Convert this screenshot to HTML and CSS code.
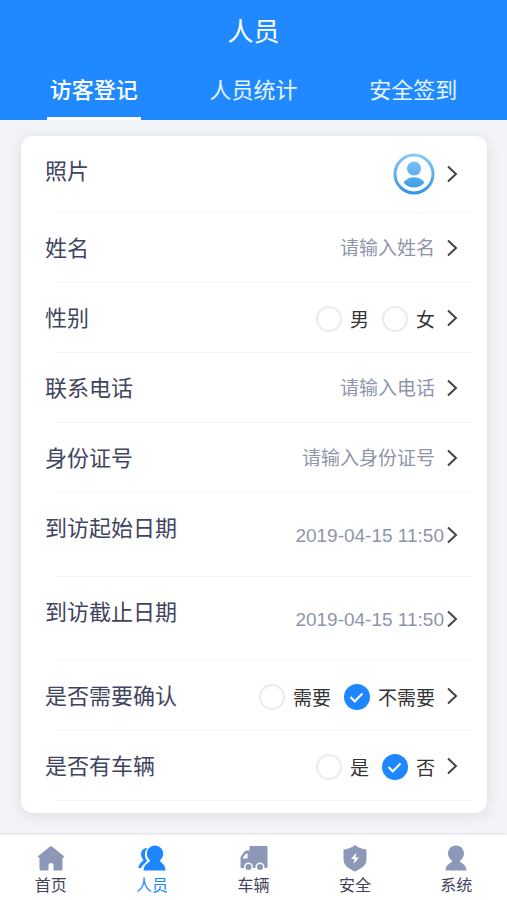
FILE: index.html
```html
<!DOCTYPE html>
<html lang="zh-CN">
<head>
    <meta charset="UTF-8">
    <meta name="viewport" content="width=device-width, initial-scale=1">
    <title>人员</title>
    <link rel="stylesheet" href="styles.css">
</head>
<body>
    <svg class="sprite" aria-hidden="true">
        <symbol id="arrow" viewBox="0 0 12 18">
            <path d="M2 1.5 L10 9 L2 16.5" fill="none" stroke="currentColor" stroke-width="2"/>
        </symbol>
    </svg>
    <header class="header">
        <h1>人员</h1>
        <nav class="tabs">
            <a class="selected" href="#visitor">访客登记</a>
            <a href="#count">人员统计</a>
            <a href="#sign">安全签到</a>
        </nav>
    </header>
    <main>
        <form class="card">
            <div class="row row-photo">
                <label class="name" for="photo">照片</label>
                <button class="photo" id="photo" type="button">
                    <svg class="avatar" viewBox="0 0 42 42">
                        <defs>
                            <linearGradient id="blue" x1="0" y1="0" x2="0" y2="42" gradientUnits="userSpaceOnUse">
                                <stop offset="0" stop-color="#8ecbf8"/>
                                <stop offset="1" stop-color="#2f93e4"/>
                            </linearGradient>
                        </defs>
                        <circle cx="21" cy="21" r="19" fill="none" stroke="url(#blue)" stroke-width="3"/>
                        <circle cx="21" cy="15.5" r="7" fill="url(#blue)"/>
                        <path d="M10.5 29.5 C13 26 17 24.3 21 24.3 S29 26 31.5 29.5 C29 33 25 34.5 21 34.5 S13 33 10.5 29.5Z" fill="url(#blue)"/>
                    </svg>
                    <svg class="arrow"><use href="#arrow"/></svg>
                </button>
            </div>
            <div class="row">
                <label class="name" for="username">姓名</label>
                <input class="text" id="username" type="text" placeholder="请输入姓名">
                <svg class="arrow"><use href="#arrow"/></svg>
            </div>
            <div class="row" role="radiogroup" aria-labelledby="sex">
                <span class="name" id="sex">性别</span>
                <div class="options">
                    <label><input type="radio" name="sex">男</label>
                    <label><input type="radio" name="sex">女</label>
                </div>
                <svg class="arrow"><use href="#arrow"/></svg>
            </div>
            <div class="row">
                <label class="name" for="phone">联系电话</label>
                <input class="text" id="phone" type="tel" placeholder="请输入电话">
                <svg class="arrow"><use href="#arrow"/></svg>
            </div>
            <div class="row">
                <label class="name" for="idcard">身份证号</label>
                <input class="text" id="idcard" type="text" placeholder="请输入身份证号">
                <svg class="arrow"><use href="#arrow"/></svg>
            </div>
            <div class="row row-date">
                <label class="name" for="start">到访起始日期</label>
                <input class="text" id="start" type="text" value="2019-04-15 11:50">
                <svg class="arrow"><use href="#arrow"/></svg>
            </div>
            <div class="row row-date">
                <label class="name" for="end">到访截止日期</label>
                <input class="text" id="end" type="text" value="2019-04-15 11:50">
                <svg class="arrow"><use href="#arrow"/></svg>
            </div>
            <div class="row" role="radiogroup" aria-labelledby="confirm">
                <span class="name" id="confirm">是否需要确认</span>
                <div class="options">
                    <label><input type="radio" name="confirm">需要</label>
                    <label><input type="radio" name="confirm" checked>不需要</label>
                </div>
                <svg class="arrow"><use href="#arrow"/></svg>
            </div>
            <div class="row" role="radiogroup" aria-labelledby="car">
                <span class="name" id="car">是否有车辆</span>
                <div class="options">
                    <label><input type="radio" name="car">是</label>
                    <label><input type="radio" name="car" checked>否</label>
                </div>
                <svg class="arrow"><use href="#arrow"/></svg>
            </div>
        </form>
    </main>
    <nav class="footer">
        <a href="#home">
            <svg viewBox="0 0 28 28">
                <path d="M13 1.6 Q14 .8 15 1.6 L27 11.2 Q27.8 12.5 26.5 12.5 H25.5 V24 Q25.5 25.5 24 25.5 H16.5 V19.5 Q16.5 18 14 18 T11.5 19.5 V25.5 H4 Q2.5 25.5 2.5 24 V12.5 H1.5 Q.2 12.5 1 11.2Z"/>
            </svg>
            首页
        </a>
        <a class="selected" href="#people">
            <svg viewBox="0 0 28 28">
                <path d="M9.5 3 C5 3 2.5 6.5 3.2 10.5 C3.6 12.5 4.5 13.5 5.3 14.5 C6 16.5 1 17 .3 23 H3.2 C4.5 19 9 17.5 9 15.5 C6 12 6.2 6.5 9.5 3Z"/>
                <path d="M17 .6 C12.3 .6 8.8 4.2 8.8 8.8 C8.8 11.6 10.2 13.8 12 15.3 C12.5 17.8 6 18 5.5 25.5 H27.5 C27.3 18 21.5 17.8 22 15.3 C23.8 13.8 25.2 11.6 25.2 8.8 C25.2 4.2 21.7 .6 17 .6Z"/>
            </svg>
            人员
        </a>
        <a href="#car">
            <svg viewBox="0 0 28 28">
                <path fill-rule="evenodd" d="M9.5 2 Q9.5 1 10.5 1 H26.5 Q27.5 1 27.5 2 V22 Q27.5 23 26.5 23 H1.5 Q.5 23 .5 22 V13 Q.5 12 1 11.2 L4 7 Q5 5.5 6.5 5.5 H9.5Z M7.5 8.5 H6 L3 12.5 V13.5 H7.5Z"/>
                <circle class="wheel" cx="8.5" cy="22" r="3.8"/>
                <circle class="wheel" cx="20" cy="22" r="3.8"/>
            </svg>
            车辆
        </a>
        <a href="#safe">
            <svg viewBox="0 0 28 28">
                <path fill-rule="evenodd" d="M14 0 C17 2.5 21 4.2 25.5 4.7 V14.5 C25.5 20.5 20 23.7 14 26.5 C8 23.7 2.5 20.5 2.5 14.5 V4.7 C7 4.2 11 2.5 14 0Z M15.5 7.5 L10 14 H13.5 L12.5 19 L18 12.5 H14.5Z"/>
            </svg>
            安全
        </a>
        <a href="#system">
            <svg viewBox="0 0 28 28">
                <path d="M14 .6 C9.5 .6 6 4.2 6 8.6 C6 11.6 7.8 14.4 10 15.8 C11 18 4 18 3.5 25.5 H24.5 C24 18 17 18 18 15.8 C20.2 14.4 22 11.6 22 8.6 C22 4.2 18.5 .6 14 .6Z"/>
            </svg>
            系统
        </a>
    </nav>
</body>
</html>
```
FILE: styles.css
```css
*{
    margin: 0;
    padding: 0;
    box-sizing: border-box;
}
body{
    min-height: 100vh;
    display: flex;
    flex-direction: column;
    background: #f2f4f7;
    color: #3f4560;
    font-family: "Liberation Sans", "Noto Sans CJK SC", sans-serif;
}
a{
    color: inherit;
    text-decoration: none;
}
.sprite{
    display: none;
}
.header{
    padding: 0 14px;
    background: #2189ff;
    color: #fff;
}
.header h1{
    font-size: 26px;
    font-weight: normal;
    line-height: 64px;
    text-align: center;
}
.tabs{
    display: flex;
}
.tabs a{
    flex: 1;
    display: flex;
    flex-direction: column;
    align-items: center;
    font-size: 22px;
    line-height: 52px;
    padding-top: 1px;
    color: #e6f5ff;
}
.tabs a::after{
    content: "";
    width: 94px;
    height: 3px;
}
.tabs .selected{
    color: #fff;
    font-weight: 500;
}
.tabs .selected::after{
    background: #fff;
}
main{
    flex: 1;
    padding: 16px 20px 22px 21px;
}
.card{
    padding-bottom: 12px;
    background: #fff;
    border-radius: 12px;
    box-shadow: 0 2px 14px rgba(40, 50, 70, .12);
}
.row{
    display: flex;
    align-items: center;
    height: 70px;
    margin: 0 15px 0 35px;
    padding-right: 14px;
    border-bottom: 1px solid #f3f4f6;
}
.row-photo{
    height: 77px;
}
.row-date{
    height: 84px;
}
.name{
    flex: none;
    align-self: flex-start;
    margin-left: -11px;
    font-size: 22px;
    line-height: 72px;
}
.arrow{
    flex: none;
    width: 12px;
    height: 18px;
    margin-left: 11px;
    color: #444;
}
.photo{
    display: flex;
    align-items: center;
    margin-left: auto;
    border: none;
    background: none;
}
.avatar{
    width: 42px;
    height: 42px;
}
.text{
    flex: 1;
    min-width: 0;
    padding-top: 2px;
    border: none;
    outline: none;
    background: none;
    color: #8e95ab;
    font-family: inherit;
    font-size: 19px;
    text-align: right;
}
.text::placeholder{
    color: #8e95ab;
}
.row-date .arrow{
    margin-left: 2px;
}
.options{
    display: flex;
    gap: 13px;
    margin-left: auto;
    padding-top: 2px;
    color: #333;
    font-size: 19px;
}
.options label{
    display: flex;
    align-items: center;
    gap: 8px;
}
.options input{
    appearance: none;
    display: flex;
    justify-content: center;
    width: 26px;
    height: 26px;
    border: 2px solid #ebebeb;
    border-radius: 50%;
}
.options input:checked{
    border-color: #1e87ff;
    background: #1e87ff;
}
.options input:checked::after{
    content: "";
    width: 5px;
    height: 10px;
    margin-top: 4px;
    border: solid #fff;
    border-width: 0 2px 2px 0;
    transform: rotate(45deg);
}
.footer{
    display: flex;
    height: 65px;
    padding-top: 10px;
    background: #fff;
    box-shadow: 0 -1px 4px rgba(0, 0, 0, .06);
}
.footer a{
    flex: 1;
    display: flex;
    flex-direction: column;
    align-items: center;
    font-size: 16px;
    line-height: 26px;
}
.footer svg{
    width: 28px;
    height: 28px;
    fill: #8d98b8;
}
.footer .wheel{
    stroke: #fff;
    stroke-width: 1.5;
}
.footer .selected{
    color: #1e87ff;
}
.footer .selected svg{
    fill: #1e87ff;
}
```
